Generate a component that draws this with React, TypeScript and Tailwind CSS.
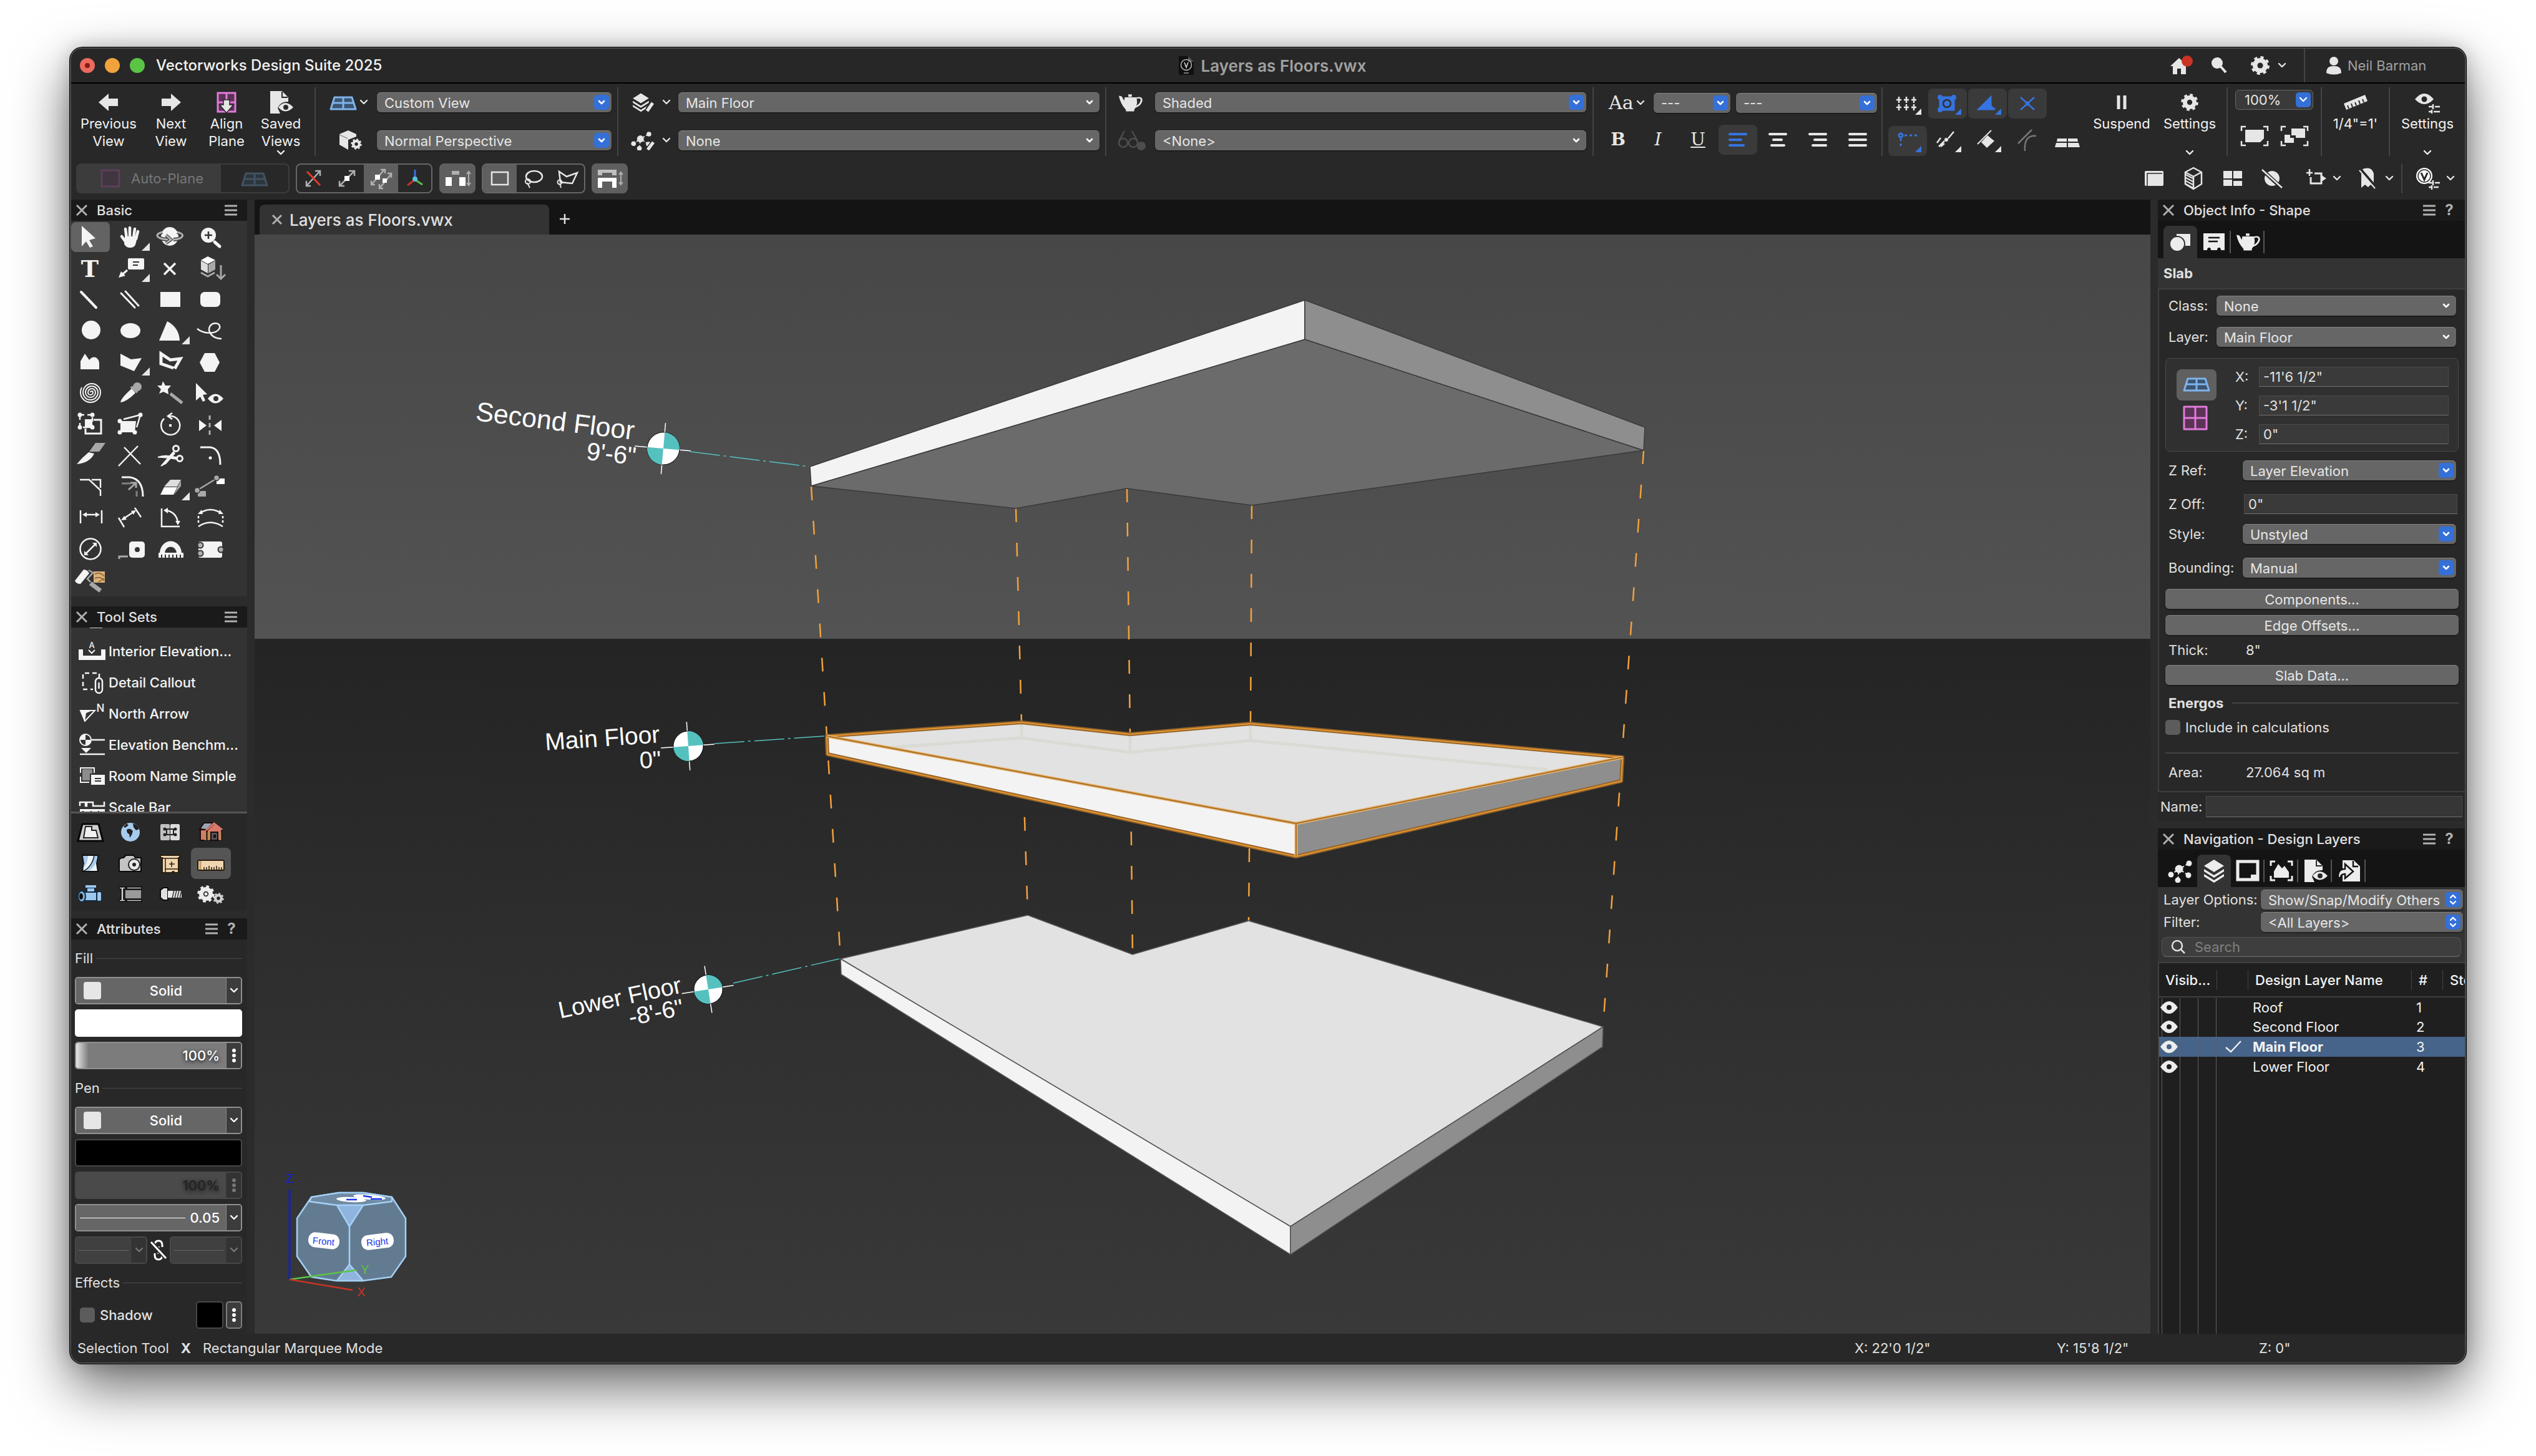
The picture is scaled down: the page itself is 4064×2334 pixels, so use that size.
import { type ReactNode } from "react";
import clsx from "clsx";

type ArrowKind = "blue" | "plain" | "updown";

function Chevron({ className }: { className?: string }) {
  return (
    <svg viewBox="0 0 14 10" className={clsx("h-[10px] w-[14px] shrink-0", className)} fill="none" stroke="currentColor" strokeWidth="2.4">
      <path d="M2 2l5 5 5-5" strokeLinecap="round" strokeLinejoin="round" />
    </svg>
  );
}

function Select({ label, value, arrow = "blue", className }: { label: string; value: string; arrow?: ArrowKind; className?: string }) {
  return (
    <div className={clsx("relative", className)}>
      <select
        aria-label={label}
        defaultValue={value}
        className="block h-8 w-full appearance-none rounded-md border-t border-[#858585] bg-[#666666] pl-3 pr-8 text-[22px] leading-[30px] text-[#e6e6e6] shadow-[0_1px_2px_rgba(0,0,0,0.6)]"
      >
        <option>{value}</option>
      </select>
      <span
        className={clsx(
          "pointer-events-none absolute right-1 top-1 flex h-6 w-6 items-center justify-center rounded-[5px] text-white",
          arrow !== "plain" && "bg-[#3470d8]",
        )}
      >
        {arrow === "updown" ? (
          <svg viewBox="0 0 24 24" className="size-6" fill="none" stroke="currentColor" strokeWidth="2.4" strokeLinecap="round" strokeLinejoin="round">
            <path d="M8 9l4-4 4 4M8 15l4 4 4-4" />
          </svg>
        ) : (
          <svg viewBox="0 0 24 24" className="size-6" fill="none" stroke="currentColor" strokeWidth="2.6" strokeLinecap="round" strokeLinejoin="round">
            <path d="M8 10l4 4 4-4" />
          </svg>
        )}
      </span>
    </div>
  );
}

function Icon({ w = 48, h = 48, children, className }: { w?: number; h?: number; children: ReactNode; className?: string }) {
  return (
    <svg viewBox={`0 0 ${w} ${h}`} width={w} height={h} fill="none" stroke="currentColor" strokeWidth="3" className={clsx("shrink-0", className)}>
      {children}
    </svg>
  );
}

/* Shared glyphs */

const planeGlyph = (
  <g stroke="#7fb4ea" strokeWidth="3" strokeLinejoin="round">
    <path d="M8 8H36L42 27H2Z" fill="#3b5570" />
    <path d="M5 17H39M22 8V27" />
  </g>
);

const layersGlyph = (
  <g fill="currentColor" stroke="none">
    <path d="M20 2L36 12L20 22L4 12Z" />
    <path d="M4 17L20 27L36 17V21L20 31L4 21Z" />
    <path d="M4 25L20 35L36 25V29L20 39L4 29Z" />
  </g>
);

const teapotGlyph = (
  <g>
    <path d="M12 10H31Q36 22 28 35V38H14V35Q5 24 2 7L7 8L11 17Z" fill="currentColor" stroke="none" />
    <path d="M18 4H24V9H18Z" fill="currentColor" stroke="none" />
    <path d="M31 12Q42 8 40 18Q38 26 29 30" strokeWidth="3" />
  </g>
);

const classGlyph = (
  <g fill="currentColor" stroke="currentColor" strokeWidth="2">
    <circle cx="18" cy="16" r="6.5" stroke="none" />
    <circle cx="34" cy="7" r="4.5" stroke="none" />
    <circle cx="5" cy="25" r="4.5" stroke="none" />
    <circle cx="33" cy="26" r="4.5" stroke="none" />
    <circle cx="16" cy="34" r="4.5" stroke="none" />
    <path d="M18 16L34 7M18 16L5 25M18 16L33 26M18 16L16 34" strokeDasharray="3 3" />
  </g>
);

const fileEyeGlyph = (
  <g>
    <path d="M5 2H24L34 12V19Q22 18 17 29L21 38H5Z" fill="currentColor" stroke="none" />
    <path d="M24 3V12H33" stroke="#282828" strokeWidth="2" />
    <path d="M18 28Q29 14 42 28Q29 41 18 28Z" fill="currentColor" stroke="none" />
    <circle cx="30" cy="28" r="4" fill="#282828" stroke="none" />
  </g>
);

// teeth come from the dashed stroke: eight dashes, eight gaps
function GearShape({ cx, cy, r, hole = "#282828" }: { cx: number; cy: number; r: number; hole?: string }) {
  const tooth = (Math.PI * 2 * r) / 16;
  return (
    <g>
      <circle cx={cx} cy={cy} r={r} fill="currentColor" strokeWidth={r * 0.5} strokeDasharray={`${tooth} ${tooth}`} />
      <circle cx={cx} cy={cy} r={r * 0.38} fill={hole} stroke="none" />
    </g>
  );
}

const corner = <path d="M51 47H64V34Z" fill="#e6e6e6" stroke="none" />;

/* Basic palette, one 64x50 drawing per tool */

const basicTools: { name: string; art: ReactNode }[] = [
  { name: "Selection", art: <path d="M19 7L41 27L31 30L37 40L32 42L26 32L19 40Z" fill="currentColor" stroke="none" /> },
  {
    name: "Pan",
    art: (
      <>
        <path d="M27 28L25 12M32 26V10M38 27L40 12M42 28L45 16M27 35L19 24" strokeWidth="4.5" strokeLinecap="round" />
        <path d="M24 24H44L42 34Q40 43 32 42Q26 42 23 36Z" fill="currentColor" stroke="none" />
        {corner}
      </>
    ),
  },
  {
    name: "Flyover",
    art: (
      <>
        <ellipse cx="32" cy="24" rx="14" ry="15" fill="currentColor" stroke="none" />
        <path d="M20 17C5 21 12 29 33 29M44 17C58 20 54 28 38 29" stroke="#333" strokeWidth="6" />
        <path d="M20 17C5 21 12 29 33 29M44 17C58 20 54 28 38 29" stroke="#b0b0b0" />
        <path d="M26 22L34 29L26 35" stroke="#333" strokeWidth="5" />
        <path d="M26 22L34 29L26 35" stroke="#b0b0b0" />
      </>
    ),
  },
  {
    name: "Zoom",
    art: (
      <>
        <circle cx="30" cy="22" r="12" fill="currentColor" stroke="none" />
        <path d="M30 16V28M24 22H36" stroke="#333" strokeWidth="2.5" />
        <path d="M40 33L48 40" strokeWidth="5" strokeLinecap="round" />
      </>
    ),
  },
  {
    name: "Text",
    art: (
      <text x="32" y="39" textAnchor="middle" fontFamily="DejaVu Serif" fontWeight="bold" fontSize="38" fill="currentColor" stroke="none">
        T
      </text>
    ),
  },
  {
    name: "Callout",
    art: (
      <>
        <rect x="29" y="9" width="26" height="18" rx="2" fill="currentColor" stroke="none" />
        <path d="M37 15H47M37 20H45" stroke="#333" strokeWidth="2" />
        <path d="M28 28L20 35" />
        <path d="M14 40L18 30L25 37Z" fill="currentColor" stroke="none" />
        {corner}
      </>
    ),
  },
  { name: "Locus", art: <path d="M23 17L41 35M41 17L23 35" strokeWidth="3.5" /> },
  {
    name: "Symbol",
    art: (
      <>
        <path d="M29 6L41 12L29 18L18 12Z" fill="#fff" stroke="none" />
        <path d="M18 13L29 19V33L18 27Z" fill="#ddd" stroke="none" />
        <path d="M41 13L30 19V33L41 27Z" fill="#a8a8a8" stroke="none" />
        <path d="M18 32L29 38L40 32" stroke="#a8a8a8" />
        <path d="M50 20V42M43 35L50 42L57 35" stroke="#a8a8a8" />
      </>
    ),
  },
  { name: "Line", art: <path d="M18 13L42 38" strokeWidth="4" strokeLinecap="round" /> },
  { name: "Double Line", art: <path d="M18 15L40 38M25 12L46 35" strokeLinecap="round" /> },
  { name: "Rectangle", art: <rect x="17" y="13" width="32" height="24" fill="currentColor" stroke="none" /> },
  { name: "Rounded Rectangle", art: <rect x="17" y="13" width="32" height="24" rx="7" fill="currentColor" stroke="none" /> },
  { name: "Circle", art: <circle cx="34" cy="24" r="15" fill="currentColor" stroke="none" /> },
  { name: "Oval", art: <ellipse cx="33" cy="25" rx="16" ry="12" fill="currentColor" stroke="none" /> },
  {
    name: "Arc",
    art: (
      <>
        <path d="M28 10Q47 20 48 41H15Z" fill="currentColor" stroke="none" />
        {corner}
      </>
    ),
  },
  { name: "Freehand", art: <path d="M12 22C22 30 42 32 48 21C50 12 38 11 33 17C27 26 36 38 51 38" strokeWidth="2.5" /> },
  { name: "Polyline", art: <path d="M17 37V24L24 12L31 22Q37 15 43 19Q47 22 47 28V37Z" fill="currentColor" stroke="none" /> },
  {
    name: "Polygon",
    art: (
      <>
        <path d="M17 12L34 21L51 19L39 40L17 31Z" fill="currentColor" stroke="none" />
        {corner}
      </>
    ),
  },
  { name: "Double Polygon", art: <path d="M38 35L18 28V12L33 22L49 20L40 36" strokeWidth="5" /> },
  { name: "Regular Polygon", art: <path d="M24 11H40L48 26L40 41H24L16 26Z" fill="currentColor" stroke="none" /> },
  {
    name: "Spiral",
    art: (
      <path
        d="M33 24a2 2 0 0 1 4 0a4 4 0 0 1-8 0a6 6 0 0 1 12 0a8 8 0 0 1-16 0a10 10 0 0 1 20 0a12 12 0 0 1-24 0a14 14 0 0 1 28 0a16 16 0 0 1-32 0a17 17 0 0 1 2-8"
        strokeWidth="2"
      />
    ),
  },
  {
    name: "Eyedropper",
    art: (
      <>
        <path d="M17 40Q18 33 35 18L41 25Q27 39 17 40Z" fill="currentColor" stroke="none" />
        <circle cx="44" cy="15" r="7" fill="#a8a8a8" stroke="none" />
        <path d="M34 15L44 24" stroke="#a8a8a8" strokeWidth="4" />
      </>
    ),
  },
  {
    name: "Magic Wand",
    art: (
      <>
        <path d="M21 6L25 13L34 13L29 19L30 27L22 23L15 26L18 19L12 13L19 13Z" fill="currentColor" stroke="none" />
        <path d="M33 26L52 41" stroke="#a8a8a8" strokeWidth="5" />
      </>
    ),
  },
  {
    name: "Visibility",
    art: (
      <>
        <path d="M10 9L28 27L21 28L25 37L21 39L17 31L10 37Z" fill="currentColor" stroke="none" />
        <path d="M29 34Q41 19 54 34Q41 49 29 34Z" fill="currentColor" stroke="none" />
        <circle cx="42" cy="34" r="4" fill="#333" stroke="none" />
      </>
    ),
  },
  {
    name: "Clip",
    art: (
      <>
        <path d="M16 10H36V30H16Z" strokeWidth="2.5" strokeDasharray="7 5" />
        <rect x="24" y="17" width="12" height="14" fill="currentColor" stroke="none" />
        <path d="M38 18H50V40H25V32" />
        <g fill="currentColor" stroke="none">
          <circle cx="16" cy="10" r="3.5" />
          <circle cx="36" cy="10" r="3.5" />
          <circle cx="16" cy="30" r="3.5" />
          <circle cx="36" cy="30" r="3.5" />
        </g>
      </>
    ),
  },
  {
    name: "Reshape",
    art: (
      <>
        <path d="M17 20H42L40 38H17Z" fill="currentColor" stroke="none" />
        <path d="M22 17L49 10L43 30" strokeWidth="2.5" />
        <g fill="currentColor" stroke="none">
          <circle cx="49" cy="10" r="3.5" />
          <circle cx="16" cy="20" r="3.5" />
          <circle cx="16" cy="38" r="3.5" />
          <circle cx="40" cy="38" r="3.5" />
        </g>
      </>
    ),
  },
  {
    name: "Rotate",
    art: (
      <>
        <path d="M23 16A15 15 0 1 0 34 12H29" strokeWidth="2.5" />
        <path d="M36 7L29 12L36 17" strokeWidth="2.5" />
        <rect x="31" y="25" width="4" height="4" fill="currentColor" stroke="none" />
      </>
    ),
  },
  {
    name: "Mirror",
    art: (
      <>
        <path d="M15 18L27 27L15 36ZM51 18L39 27L51 36Z" fill="currentColor" stroke="none" />
        <path d="M32 11V42" stroke="#b0b0b0" strokeDasharray="7 5" />
      </>
    ),
  },
  {
    name: "Split",
    art: (
      <>
        <path d="M11 39Q20 28 30 20L39 22Q32 37 11 39Z" fill="currentColor" stroke="none" />
        <path d="M31 19L41 5H57L47 19Z" fill="#a8a8a8" stroke="none" />
      </>
    ),
  },
  { name: "Connect", art: <path d="M14 42L45 10M23 12L49 39" strokeWidth="2.5" /> },
  {
    name: "Trim",
    art: (
      <>
        <circle cx="42" cy="14" r="4.5" />
        <circle cx="48" cy="30" r="4.5" />
        <path d="M13 28Q24 23 43 28L42 31Q24 28 13 28ZM18 42L38 19L40 22L26 38Z" fill="currentColor" strokeWidth="1.5" />
      </>
    ),
  },
  {
    name: "Fillet",
    art: (
      <>
        <path d="M17 12H33Q49 14 49 40" />
        <circle cx="33" cy="29" r="2.5" fill="currentColor" stroke="none" />
      </>
    ),
  },
  { name: "Chamfer", art: <path d="M16 14H31L49 31V40M35 14H49V27" strokeWidth="2.5" /> },
  {
    name: "Offset",
    art: (
      <>
        <path d="M19 10H32Q53 13 53 41" />
        <path d="M19 20H33M43 32V41" stroke="#808080" />
        <path d="M30 30L42 19M33 19H42V27" stroke="#a8a8a8" />
      </>
    ),
  },
  {
    name: "Eraser",
    art: (
      <>
        <path d="M17 38L23 26H44L38 38Z" fill="#fff" stroke="none" />
        <path d="M23 25L33 14H50L44 25Z" fill="#ddd" stroke="none" />
        <path d="M39 38L45 25L50 15V24Z" fill="#a8a8a8" stroke="none" />
        {corner}
      </>
    ),
  },
  {
    name: "Attribute Mapping",
    art: (
      <>
        <path d="M12 31L43 12" stroke="#a8a8a8" strokeWidth="2.5" />
        <rect x="43" y="12" width="13" height="9" fill="#fff" stroke="none" />
        <rect x="13" y="32" width="13" height="9" fill="#a8a8a8" stroke="none" />
        <circle cx="43" cy="11" r="4.5" fill="#a8a8a8" stroke="#333" strokeWidth="1.5" />
        <circle cx="12" cy="31" r="4.5" fill="#a8a8a8" stroke="#333" strokeWidth="1.5" />
      </>
    ),
  },
  {
    name: "Dimension",
    art: (
      <>
        <path d="M17 13V34M51 13V34M23 20H45" strokeWidth="2.5" />
        <path d="M20 20L27 16V24ZM48 20L41 16V24Z" fill="currentColor" stroke="none" />
      </>
    ),
  },
  {
    name: "Unconstrained Dimension",
    art: (
      <>
        <path d="M14 25L23 40M40 9L50 24M21 27L39 15" strokeWidth="2.5" />
        <path d="M18 29L23 22L27 28ZM42 13L34 14L38 20Z" fill="currentColor" stroke="none" />
      </>
    ),
  },
  {
    name: "Angular Dimension",
    art: (
      <>
        <path d="M19 10V39H48M26 13Q43 16 45 33" strokeWidth="2.5" />
        <path d="M22 13L29 9V18ZM45 37L41 30H49Z" fill="currentColor" stroke="none" />
      </>
    ),
  },
  {
    name: "Arc Length Dimension",
    art: (
      <>
        <path d="M16 18Q33 6 51 18M14 39Q33 26 53 39" strokeWidth="2.5" />
        <path d="M14 22V33M53 22V33" strokeWidth="2.5" strokeDasharray="4 3" />
        <path d="M13 19L19 12L21 19ZM54 19L48 12L46 19Z" fill="currentColor" stroke="none" />
      </>
    ),
  },
  {
    name: "Diameter",
    art: (
      <>
        <circle cx="33" cy="25" r="16.5" strokeWidth="2.5" />
        <path d="M26 32L40 18" strokeWidth="2.5" />
        <path d="M23 35V28L30 35ZM43 15V22L36 15Z" fill="currentColor" stroke="none" />
      </>
    ),
  },
  {
    name: "Tape Measure",
    art: (
      <>
        <rect x="31" y="13" width="25" height="26" rx="5" fill="currentColor" stroke="none" />
        <circle cx="44" cy="26" r="4" fill="#333" stroke="none" />
        <path d="M15 41V37H29" stroke="#a8a8a8" />
      </>
    ),
  },
  {
    name: "Protractor",
    art: (
      <>
        <path d="M16 32A17 19 0 0 1 51 32H43A9 10 0 0 0 24 32Z" fill="currentColor" stroke="none" />
        <rect x="14" y="31" width="40" height="8" rx="1" fill="currentColor" stroke="none" />
        <path d="M19 39V34M25 39V34M31 39V34M37 39V34M43 39V34M49 39V34" stroke="#333" strokeWidth="2" />
      </>
    ),
  },
  {
    name: "Stake",
    art: (
      <>
        <rect x="14" y="13" width="38" height="26" rx="3" fill="currentColor" stroke="none" />
        <g fill="#b0b0b0" stroke="#333" strokeWidth="2">
          <circle cx="17" cy="19" r="4.5" />
          <circle cx="17" cy="32" r="4.5" />
          <circle cx="50" cy="26" r="4.5" />
        </g>
      </>
    ),
  },
  {
    name: "Paint Roller",
    art: (
      <>
        <rect x="38" y="11" width="18" height="18" fill="#d9b27c" stroke="none" />
        <path d="M40 15Q50 12 55 19M40 22Q50 18 55 26M46 28L55 22" stroke="#8a5a24" strokeWidth="1.5" />
        <path d="M8 26L22 8Q28 8 31 14L17 31Q10 31 8 26Z" fill="currentColor" stroke="none" />
        <path d="M30 9L37 13L28 23L33 28" stroke="#a8a8a8" strokeWidth="2.5" />
        <path d="M33 30L49 42" stroke="#a8a8a8" strokeWidth="7" />
      </>
    ),
  },
];

const dimNotes: { name: string; art: ReactNode }[] = [
  {
    name: "Interior Elevation...",
    art: (
      <>
        <path d="M1 22H8V32H37V22H44V39H1Z" fill="currentColor" stroke="none" />
        <text x="22" y="20" textAnchor="middle" fontSize="13" fill="currentColor" stroke="none">
          A
        </text>
        <path d="M17 23L22 28L27 23" strokeWidth="2" />
      </>
    ),
  },
  {
    name: "Detail Callout",
    art: (
      <>
        <path d="M34 18V10H8V36H24" strokeWidth="2.5" strokeDasharray="7 5" />
        <rect x="28" y="18" width="11" height="24" rx="5.5" strokeWidth="2.5" />
        <path d="M33.5 25V35" strokeWidth="2.5" />
      </>
    ),
  },
  {
    name: "North Arrow",
    art: (
      <>
        <path d="M4 20H27L11 37Z" strokeWidth="2" />
        <path d="M3 19H26L13 24L11 38Z" fill="currentColor" stroke="none" />
        <text x="36" y="22" textAnchor="middle" fontSize="17" fill="currentColor" stroke="none">
          N
        </text>
      </>
    ),
  },
  {
    name: "Elevation Benchm...",
    art: (
      <>
        <circle cx="12" cy="17" r="9" strokeWidth="2" />
        <path d="M12 17V8A9 9 0 0 0 3 17ZM12 17V26A9 9 0 0 0 21 17ZM5 30H21L13 38Z" fill="currentColor" stroke="none" />
        <path d="M22 17H43M3 40H43" strokeWidth="2.5" />
      </>
    ),
  },
  {
    name: "Room Name Simple",
    art: (
      <>
        <rect x="7" y="14" width="16" height="18" fill="#8c8c8c" stroke="none" />
        <path d="M4 20V12H26V20M4 26V35H18" strokeWidth="2" />
        <rect x="20" y="22" width="24" height="18" fill="currentColor" stroke="#333" strokeWidth="2" />
        <path d="M27 29H37M27 33H37" stroke="#333" strokeWidth="2" />
      </>
    ),
  },
  {
    name: "Scale Bar",
    art: (
      <>
        <path d="M3 23V17H12V23H14V17H24V23H42V16" strokeWidth="2.5" />
        <path d="M3 28H43V44H3Z" fill="currentColor" stroke="none" />
        <path d="M15 38V33M21 38V31M27 38V33M33 38V31M38 38V33" stroke="#333" strokeWidth="2" />
        <circle cx="8" cy="33" r="2" fill="#333" stroke="none" />
      </>
    ),
  },
];

const toolSets: { name: string; art: ReactNode }[] = [
  {
    name: "Building Shell",
    art: (
      <>
        <path d="M20 12H46L53 39H13Z" fill="#cfcfcf" stroke="#050505" />
        <path d="M25 16H35V22H42L45 34H22Z" fill="#f0f0f0" stroke="#222" strokeWidth="2" />
      </>
    ),
  },
  {
    name: "GIS",
    art: (
      <>
        <circle cx="33" cy="25" r="15" fill="#a6cbee" stroke="none" />
        <path d="M27 21Q32 17 37 23Q36 29 32 34L31 28Q27 27 27 21ZM37 11Q45 13 47 20L42 22L38 17ZM22 16L27 11L30 14L24 18Z" fill="#222" stroke="none" />
      </>
    ),
  },
  {
    name: "Electrical",
    art: (
      <>
        <rect x="17" y="12" width="15" height="26" rx="2" fill="#c0c0c0" stroke="none" />
        <rect x="33" y="12" width="15" height="26" rx="2" fill="#dcdcdc" stroke="none" />
        <path d="M23 20H42M23 29H42M27 20V29M38 20V29" stroke="#222" strokeWidth="2" />
        <g fill="#222" stroke="none">
          <circle cx="24" cy="20" r="2.5" />
          <circle cx="24" cy="29" r="2.5" />
          <circle cx="41" cy="20" r="2.5" />
          <circle cx="41" cy="29" r="2.5" />
        </g>
      </>
    ),
  },
  {
    name: "Framing",
    art: (
      <>
        <path d="M17 21V38H27V21ZM28 22L40 11L51 19V38H28Z" fill="#d8796a" stroke="#1a0d0a" strokeWidth="2" />
        <path d="M16 20L23 10H38L27 21Z" fill="#9aa5b5" stroke="#1a0d0a" strokeWidth="2" />
        <path d="M26 22L39 11L52 21" stroke="#d8796a" strokeWidth="3" />
        <path d="M30 24V38M49 24V38M25 24V38" stroke="#c08a52" strokeWidth="3" />
        <rect x="34" y="25" width="11" height="13" fill="#555" stroke="#111" strokeWidth="2" />
        <rect x="38" y="29" width="4" height="5" fill="#111" stroke="none" />
      </>
    ),
  },
  {
    name: "3D Modeling",
    art: (
      <>
        <path d="M20 12H45L43 25L45 38H20L22 25Z" fill="#eef4fa" stroke="#111" strokeWidth="2" />
        <path d="M21 13H29Q29 24 21 34L23 25ZM44 16Q42 30 30 37H22Q36 28 39 13H44Z" fill="#a6cbee" stroke="none" />
        <path d="M39 12Q36 30 21 38" stroke="#111" strokeWidth="1.5" />
      </>
    ),
  },
  {
    name: "Visualization",
    art: (
      <>
        <path d="M15 20Q15 16 22 16L26 12H38L41 16H50V38H15Z" fill="#c4c4c4" stroke="#0a0a0a" strokeWidth="2" />
        <circle cx="39" cy="27" r="9" fill="#e8e8e8" stroke="#222" strokeWidth="2" />
        <circle cx="39" cy="27" r="3" fill="#222" stroke="none" />
      </>
    ),
  },
  {
    name: "Furn/Fixtures",
    art: (
      <>
        <path d="M17 12H48V16H46V40H40Q38 36 35 40H20V16H17Z" fill="#efd6b0" stroke="#2a1c0c" strokeWidth="2" />
        <path d="M25 17V40M35 22V31M31 26H40M25 34H46M20 17H46" stroke="#2a1c0c" strokeWidth="1.5" />
      </>
    ),
  },
  {
    name: "Dims/Notes",
    art: (
      <>
        <rect x="13" y="20" width="42" height="16" rx="2" fill="#efd6b0" stroke="#2a1c0c" strokeWidth="2" />
        <path d="M17 21V35" stroke="#c99b62" strokeWidth="3" />
        <path d="M23 36V31M27 36V31M31 36V29M35 36V31M39 36V31M43 36V29M47 36V31M51 36V31" stroke="#2a1c0c" strokeWidth="1.5" />
      </>
    ),
  },
  {
    name: "MEP",
    art: (
      <>
        <path d="M20 21H46V35H20ZM27 14H40V21H27Z" fill="#9cc8ee" stroke="#12293d" strokeWidth="2" />
        <path d="M25 12H42" stroke="#9cc8ee" strokeWidth="4" />
        <ellipse cx="19" cy="28" rx="6" ry="9" fill="#7fb0dc" stroke="#12293d" strokeWidth="2" />
        <ellipse cx="18" cy="28" rx="3" ry="5" fill="#111" stroke="none" />
        <rect x="43" y="20" width="8" height="16" rx="3" fill="#9cc8ee" stroke="#12293d" strokeWidth="2" />
      </>
    ),
  },
  {
    name: "Detailing",
    art: (
      <>
        <path d="M27 13H51V16H27ZM27 33H51V36H27Z" fill="#d0d0d0" stroke="#0a0a0a" strokeWidth="1.5" />
        <rect x="25" y="18" width="25" height="13" fill="#9a9a9a" stroke="none" />
        <path d="M15 13H25V16H22V33H25V36H15V33H18V16H15Z" fill="#d8d8d8" stroke="#0a0a0a" strokeWidth="1.5" />
      </>
    ),
  },
  {
    name: "Fasteners",
    art: (
      <>
        <path d="M17 18L22 14H29V34H22L17 30Z" fill="#e0e0e0" stroke="#0a0a0a" strokeWidth="2" />
        <rect x="29" y="19" width="22" height="11" fill="#e8e8e8" stroke="none" />
        <path d="M36 31L39 18M40 31L43 18M44 31L47 18M48 31L51 18" stroke="#333" strokeWidth="1.5" />
      </>
    ),
  },
  {
    name: "Machine Design",
    art: (
      <>
        <g color="#d0d0d0">
          <GearShape cx={46} cy={31} r={7} hole="#222" />
        </g>
        <GearShape cx={26} cy={24} r={11} />
        <circle cx="26" cy="24" r="2.5" fill="#ececec" stroke="none" />
      </>
    ),
  },
];

/* Window chrome */

function TitleBar() {
  return (
    <header className="flex h-14 items-center border-b-2 border-black bg-[#272727]">
      <div className="flex flex-1 items-center pl-[14px]">
        <div className="flex gap-4">
          <button aria-label="Close" className="flex size-6 items-center justify-center rounded-full bg-[#ec6a5e]">
            <span className="size-2 rounded-full bg-[#8b1a10]" />
          </button>
          <button aria-label="Minimize" className="size-6 rounded-full bg-[#f0a33c]" />
          <button aria-label="Zoom window" className="size-6 rounded-full bg-[#5ac545]" />
        </div>
        <span className="ml-[18px] text-2xl font-medium text-[#f2f2f2]">Vectorworks Design Suite 2025</span>
      </div>
      <div className="flex items-center gap-3 text-[26px] font-semibold text-[#a0a0a0]">
        <svg viewBox="0 0 24 30" className="h-[30px] w-6">
          <path d="M0 0H15L24 9V30H0Z" fill="#101010" />
          <path d="M15 0L24 9H15Z" fill="#555" />
          <circle cx="12" cy="14" r="8.5" fill="none" stroke="#bbb" strokeWidth="1.5" />
          <path d="M9 10L12 18L15 10" fill="none" stroke="#ddd" strokeWidth="1.5" />
          <path d="M8 27H16" stroke="#777" strokeWidth="2" />
        </svg>
        <h1>Layers as Floors.vwx</h1>
      </div>
      <div className="flex h-full flex-1 items-center justify-end text-[#e6e6e6]">
        <button aria-label="Home" className="mr-[26px]">
          <Icon w={40} h={32}>
            <path d="M2 17L16 4L30 17H27V30H19V21H13V30H6V17Z" fill="currentColor" stroke="none" />
            <circle cx="29" cy="9" r="9" fill="#c93425" stroke="none" />
          </Icon>
        </button>
        <button aria-label="Find" className="mr-9">
          <Icon w={28} h={32}>
            <circle cx="11" cy="12" r="9" fill="currentColor" stroke="none" />
            <path d="M17 18L25 27" strokeWidth="4" />
          </Icon>
        </button>
        <button aria-label="Preferences" className="mr-7 flex items-center gap-3">
          <Icon w={32} h={32}>
            <GearShape cx={16} cy={16} r={12} />
          </Icon>
          <Chevron />
        </button>
        <button className="flex h-full w-[258px] items-center gap-2 border-l-2 border-[#444] pl-8 text-[22px] text-[#a0a0a0]">
          <Icon w={28} h={32} className="text-[#e6e6e6]">
            <circle cx="14" cy="9" r="7" fill="currentColor" stroke="none" />
            <path d="M2 28Q2 16 14 17Q26 16 26 28Q14 33 2 28Z" fill="currentColor" stroke="none" />
          </Icon>
          Neil Barman
        </button>
      </div>
    </header>
  );
}

function BigButton({ icon, lines, menu, className }: { icon: ReactNode; lines: string[]; menu?: boolean; className: string }) {
  return (
    <button className={clsx("flex h-[110px] flex-col items-center pt-1 text-[22px] leading-7 text-[#f2f2f2]", className)}>
      <span className="flex h-10 items-center">{icon}</span>
      {lines.map((line) => (
        <span key={line} className="whitespace-nowrap">
          {line}
        </span>
      ))}
      {menu && <Chevron className="mt-auto" />}
    </button>
  );
}

function Cell({ label, active, children }: { label: string; active?: boolean; children: ReactNode }) {
  return (
    <button
      aria-label={label}
      className={clsx("flex h-12 w-[62px] items-center justify-center rounded-lg", active ? "bg-[#3a3a3a] text-[#3574e0]" : "text-[#e6e6e6]")}
    >
      {children}
    </button>
  );
}

function AlignIcon({ rows }: { rows: [number, number][] }) {
  return (
    <Icon w={32} h={28}>
      {rows.map(([x1, x2], i) => (
        <path key={i} d={`M${x1} ${5 + i * 9}H${x2}`} strokeWidth="4" strokeLinecap="round" />
      ))}
    </Icon>
  );
}

const snapCorner = <path d="M46 40V30L36 40Z" fill="currentColor" stroke="none" />;

function ViewBar() {
  return (
    <div className="flex h-[122px] py-1.5">
      <div className="flex w-[392px] shrink-0 border-r-2 border-[#444]">
        <BigButton
          className="w-[120px]"
          lines={["Previous", "View"]}
          icon={
            <Icon w={36} h={36} className="text-[#e6e6e6]">
              <path d="M2 18L18 4V12H33V24H18V32Z" fill="currentColor" stroke="none" />
            </Icon>
          }
        />
        <BigButton
          className="w-20"
          lines={["Next", "View"]}
          icon={
            <Icon w={36} h={36} className="text-[#e6e6e6]">
              <path d="M34 18L18 4V12H3V24H18V32Z" fill="currentColor" stroke="none" />
            </Icon>
          }
        />
        <BigButton
          className="w-[98px]"
          lines={["Align", "Plane"]}
          icon={
            <Icon w={34} h={36}>
              <path d="M3 3H31V33H3ZM3 18H31M17 3V33" fill="#5a3355" stroke="#e27bdb" />
              <path d="M12 14H22V22H28L17 35L6 22H12Z" fill="#e6e6e6" stroke="#282828" strokeWidth="1.5" />
            </Icon>
          }
        />
        <BigButton className="w-[76px]" lines={["Saved", "Views"]} menu icon={<Icon w={44} h={40} className="text-[#e6e6e6]">{fileEyeGlyph}</Icon>} />
      </div>

      <div className="flex shrink-0 flex-col gap-[29px] border-r-2 border-[#444] pl-[22px] pr-[9px] pt-2">
        <div className="flex items-center">
          <button aria-label="Working plane" className="flex w-[76px] items-center gap-1 text-[#e6e6e6]">
            <Icon w={44} h={32}>{planeGlyph}</Icon>
            <Chevron />
          </button>
          <Select label="View" value="Custom View" className="w-[376px]" />
        </div>
        <div className="flex items-center">
          <span className="flex w-[76px] items-center pl-3 text-[#e6e6e6]">
            <Icon w={42} h={32}>
              <path d="M4 6L18 0L31 6V10L18 15V31L4 23Z" fill="currentColor" stroke="none" />
              <path d="M4 7L17 13" stroke="#999" strokeWidth="1.5" />
              <GearShape cx={31} cy={22} r={7} />
            </Icon>
          </span>
          <Select label="Projection" value="Normal Perspective" className="w-[376px]" />
        </div>
      </div>

      <div className="flex min-w-0 flex-1 flex-col gap-[29px] border-r-2 border-[#444] pl-5 pr-[9px] pt-2">
        <div className="flex items-center">
          <button aria-label="Layers" className="flex w-[76px] items-center gap-2 text-[#e6e6e6]">
            <Icon w={42} h={32}>
              <g transform="scale(0.8)">{layersGlyph}</g>
              <path d="M27 28L36 16" stroke="#282828" strokeWidth="9" />
              <path d="M26 30L35 17" strokeWidth="5" />
            </Icon>
            <Chevron />
          </button>
          <Select label="Active layer" value="Main Floor" arrow="plain" className="flex-1" />
        </div>
        <div className="flex items-center">
          <button aria-label="Classes" className="flex w-[76px] items-center gap-2 text-[#e6e6e6]">
            <Icon w={42} h={32}>
              <g transform="scale(0.85)">{classGlyph}</g>
              <path d="M27 31L36 19" stroke="#282828" strokeWidth="8" />
              <path d="M27 31L36 19" strokeWidth="5" />
            </Icon>
            <Chevron />
          </button>
          <Select label="Active class" value="None" arrow="plain" className="flex-1" />
        </div>
      </div>

      <div className="flex min-w-0 flex-1 flex-col gap-[29px] border-r-2 border-[#444] pl-[18px] pr-[10px] pt-2">
        <div className="flex items-center">
          <span className="w-[60px] text-[#e6e6e6]">
            <Icon w={44} h={32}>
              <g transform="scale(0.95 0.8)">{teapotGlyph}</g>
            </Icon>
          </span>
          <Select label="Render mode" value="Shaded" className="flex-1" />
        </div>
        <div className="flex items-center">
          <span className="w-[60px] text-[#4d4d4d]">
            <Icon w={48} h={32}>
              <g strokeWidth="2.5">
                <circle cx="9" cy="20" r="7" />
                <circle cx="25" cy="20" r="7" />
                <path d="M2 17L11 1M32 17L23 1" />
              </g>
              <circle cx="38" cy="25" r="7" fill="currentColor" stroke="none" />
            </Icon>
          </span>
          <Select label="Render style" value="<None>" arrow="plain" className="flex-1" />
        </div>
      </div>

      <div className="flex w-[463px] shrink-0 flex-col border-r-2 border-[#444] pl-2">
        <div className="mb-3 flex h-12 items-center pt-px">
          <button aria-label="Font" className="flex w-[88px] items-center gap-1 pl-4 font-['DejaVu_Serif'] text-[30px] text-[#e6e6e6]">
            Aa
            <Chevron />
          </button>
          <Select label="Font size" value="---" className="mr-[9px] w-[123px]" />
          <Select label="Font family" value="---" className="w-[226px]" />
        </div>
        <div className="flex gap-0.5">
          <Cell label="Bold">
            <span className="font-['DejaVu_Serif'] text-[28px] font-bold">B</span>
          </Cell>
          <Cell label="Italic">
            <span className="font-['DejaVu_Serif'] text-[28px] italic">I</span>
          </Cell>
          <Cell label="Underline">
            <span className="font-['DejaVu_Serif'] text-[28px] underline">U</span>
          </Cell>
          <Cell label="Align left" active>
            <AlignIcon rows={[[3, 29], [3, 21], [3, 25]]} />
          </Cell>
          <Cell label="Align center">
            <AlignIcon rows={[[3, 29], [9, 22], [6, 26]]} />
          </Cell>
          <Cell label="Align right">
            <AlignIcon rows={[[3, 29], [11, 29], [8, 29]]} />
          </Cell>
          <Cell label="Justify">
            <AlignIcon rows={[[3, 29], [3, 29], [3, 29]]} />
          </Cell>
        </div>
      </div>

      <div className="flex w-[553px] shrink-0 border-r-2 border-[#444] pl-[9px]">
        <div className="flex flex-col gap-3 pt-0.5">
          <div className="flex gap-0.5">
            <Cell label="Snap to grid">
              <Icon w={48} h={44}>
                <path d="M6 16H14M18 16H26M30 16H38M6 28H14M18 28H26M30 28H38M10 11V21M22 11V21M34 11V21M10 23V33M22 23V33M34 23V33" strokeWidth="2.5" />
                {snapCorner}
              </Icon>
            </Cell>
            <Cell label="Snap to object" active>
              <Icon w={48} h={44}>
                <rect x="12" y="12" width="22" height="20" fill="currentColor" />
                <circle cx="23" cy="22" r="6" stroke="#303030" strokeWidth="2.5" />
                <circle cx="12" cy="12" r="4" fill="currentColor" stroke="none" />
                <circle cx="34" cy="12" r="4" fill="currentColor" stroke="none" />
                <circle cx="12" cy="32" r="4" fill="currentColor" stroke="none" />
                {snapCorner}
              </Icon>
            </Cell>
            <Cell label="Snap to angle" active>
              <Icon w={48} h={44}>
                <path d="M10 31L29 12V24Q30 28 36 31Z" fill="currentColor" />
                {snapCorner}
              </Icon>
            </Cell>
            <Cell label="Snap to intersection" active>
              <Icon w={48} h={44}>
                <path d="M13 12L35 32M35 12L13 32" strokeWidth="2.5" />
                <circle cx="24" cy="22" r="3.5" fill="currentColor" stroke="none" />
              </Icon>
            </Cell>
          </div>
          <div className="flex gap-0.5">
            <Cell label="Smart points" active>
              <Icon w={48} h={44}>
                <path d="M13 18V34M19 13H40" strokeDasharray="4 4" />
                <circle cx="13" cy="13" r="3" />
                {snapCorner}
              </Icon>
            </Cell>
            <Cell label="Smart edge">
              <Icon w={48} h={44}>
                <path d="M10 31L19 22M25 18L34 7M7 25L13 17M13 31L19 26" strokeWidth="2.5" />
                <circle cx="22" cy="20" r="3" fill="currentColor" stroke="none" />
                {snapCorner}
              </Icon>
            </Cell>
            <Cell label="Snap to distance">
              <Icon w={48} h={44}>
                <path d="M14 24L24 13L35 22L23 33Z" fill="currentColor" stroke="none" />
                <path d="M8 27L30 5" strokeWidth="2" />
                {snapCorner}
              </Icon>
            </Cell>
            <Cell label="Snap to tangent">
              <Icon w={48} h={44} className="text-[#777]">
                <path d="M9 26L31 4M38 14Q18 12 20 38" strokeWidth="2.5" />
              </Icon>
            </Cell>
            <Cell label="Working plane snap">
              <Icon w={48} h={44}>
                <path d="M8 18H23V23H7ZM25 18H40L41 23H25ZM6 25H23V32H4ZM25 25H42L44 32H25Z" fill="currentColor" stroke="none" />
              </Icon>
            </Cell>
          </div>
        </div>
        <BigButton
          className="ml-[6px] w-[100px]"
          lines={["Suspend"]}
          icon={
            <Icon w={20} h={26} className="text-[#e6e6e6]">
              <path d="M5 2V24M15 2V24" strokeWidth="5" />
            </Icon>
          }
        />
        <BigButton
          className="ml-1 w-[110px]"
          lines={["Settings"]}
          menu
          icon={
            <Icon w={32} h={32} className="text-[#e6e6e6]">
              <GearShape cx={16} cy={16} r={11} />
            </Icon>
          }
        />
      </div>

      <div className="flex w-[151px] shrink-0 flex-col border-r-2 border-[#444] pl-3 pt-1">
        <div className="relative w-[125px]">
          <input aria-label="Zoom" defaultValue="100%" className="h-8 w-full rounded-md border border-[#666] bg-[#3a3a3a] pl-3.5 text-[22px] text-[#e6e6e6]" />
          <button aria-label="Zoom presets" className="absolute right-1 top-1 flex h-6 w-6 items-center justify-center rounded-[5px] bg-[#3470d8] text-white">
            <Chevron />
          </button>
        </div>
        <div className="mt-6 flex gap-[18px] pl-2 text-[#e6e6e6]">
          <button aria-label="Fit to page">
            <Icon w={46} h={36}>
              <path d="M2 10V3H9M37 3H44V10M44 26V33H37M9 33H2V26" strokeWidth="2.5" />
              <path d="M8 8H38V22L32 28H8Z" fill="currentColor" stroke="none" />
            </Icon>
          </button>
          <button aria-label="Fit to objects">
            <Icon w={46} h={36}>
              <path d="M2 10V3H9M37 3H44V10M44 26V33H37M9 33H2V26" strokeWidth="2.5" />
              <path d="M18 6H40V21H25V17H18ZM7 16H16V21H22V29H7Z" fill="currentColor" stroke="none" />
            </Icon>
          </button>
        </div>
      </div>

      <div className="w-[109px] shrink-0 border-r-2 border-[#444]">
        <BigButton
          className="w-full"
          lines={[`1/4"=1'`]}
          icon={
            <Icon w={42} h={28} className="text-[#e6e6e6]">
              <path d="M2 16L36 2L40 12L6 26Z" fill="currentColor" stroke="none" />
              <path d="M10 24L8 19M16 22L14 16M22 19L20 14M28 17L26 11M34 14L32 9" stroke="#282828" strokeWidth="2" />
            </Icon>
          }
        />
      </div>
      <BigButton
        className="w-[120px] shrink-0"
        lines={["Settings"]}
        menu
        icon={
          <Icon w={44} h={36} className="text-[#e6e6e6]">
            <path d="M2 13Q17 -5 32 13Q17 29 2 13Z" fill="currentColor" stroke="none" />
            <circle cx="17" cy="13" r="4.5" fill="#282828" stroke="none" />
            <path d="M24 25H30M34 25H42M24 33H28M32 33H42M31 21V29M29 30V36" strokeWidth="2.5" />
          </Icon>
        }
      />
    </div>
  );
}

function ModeButton({ label, active, width, children }: { label: string; active?: boolean; width: string; children: ReactNode }) {
  return (
    <button aria-label={label} className={clsx("flex h-full items-center justify-center text-[#e6e6e6]", width, active && "bg-[#5f5f5f]")}>
      {children}
    </button>
  );
}

function ModeBar() {
  const group = "flex h-12 overflow-hidden rounded-lg border-2 border-[#666]";
  return (
    <div className="flex h-16 items-start pt-1.5">
      <div className="ml-2 mr-[10px] flex h-12 w-[342px] overflow-hidden rounded-lg border-2 border-[#3c3c3c] text-[#777]">
        <button className="flex flex-1 items-center gap-4 bg-[#3c3c3c] pl-9 text-[22px]">
          <Icon w={34} h={32}>
            <path d="M3 3H31V29H3Z" stroke="#5c3f59" fill="#403640" />
          </Icon>
          Auto-Plane
        </button>
        <button aria-label="Layer plane" className="flex w-[108px] items-center justify-center opacity-30">
          <Icon w={44} h={32}>{planeGlyph}</Icon>
        </button>
      </div>
      <div className={clsx(group, "mr-[11px]")}>
        <ModeButton label="Disable interactive scaling" width="w-[53px]">
          <Icon w={36} h={36}>
            <path d="M6 30L28 6M20 6H28V14M6 22V30H13" stroke="#b0b0b0" strokeWidth="2.5" />
            <path d="M7 7L28 29" stroke="#e03a2c" />
          </Icon>
        </ModeButton>
        <ModeButton label="Single object scaling" width="w-[54px]">
          <Icon w={36} h={36}>
            <path d="M6 30L30 6M21 6H30V14M6 22V30H14" stroke="#b0b0b0" strokeWidth="2.5" />
            <rect x="14" y="14" width="8" height="8" fill="#fff" stroke="none" />
          </Icon>
        </ModeButton>
        <ModeButton label="Unrestricted scaling" width="w-[55px]" active>
          <Icon w={36} h={36}>
            <path d="M2 22V28H8M2 28L23 4M17 4H24V10M15 34L34 11M28 10H34V17M15 27V34H21" stroke="#b0b0b0" strokeWidth="2.5" />
            <path d="M8 12H16V20H8ZM20 18H27V25H20Z" fill="#fff" stroke="none" />
          </Icon>
        </ModeButton>
        <ModeButton label="Triad" width="w-[53px]">
          <Icon w={36} h={36}>
            <path d="M18 18V4" stroke="#3574e0" />
            <path d="M18 20L6 29" stroke="#c93425" />
            <path d="M18 20L30 28" stroke="#5ac545" />
            <circle cx="18" cy="19" r="4" fill="#5bc0d8" stroke="none" />
          </Icon>
        </ModeButton>
      </div>
      <button aria-label="Wall insertion" className="mr-[10px] flex h-12 w-[58px] items-center justify-center rounded-lg bg-[#5f5f5f] text-white">
        <Icon w={46} h={32}>
          <path d="M4 14H14V28H4ZM26 14H36V28H26Z" fill="currentColor" stroke="none" />
          <rect x="14" y="4" width="12" height="6" fill="#b0b0b0" stroke="none" />
          <path d="M41 6V26M38 9L41 5L44 9M38 23L41 27L44 23" stroke="#b0b0b0" strokeWidth="2" />
        </Icon>
      </button>
      <div className={clsx(group, "mr-[10px]")}>
        <ModeButton label="Rectangular marquee" width="w-[54px]" active>
          <Icon w={36} h={32}>
            <rect x="5" y="6" width="26" height="20" strokeWidth="2.5" />
          </Icon>
        </ModeButton>
        <ModeButton label="Lasso marquee" width="w-[54px]">
          <Icon w={36} h={36}>
            <ellipse cx="19" cy="15" rx="13" ry="9" strokeWidth="2.5" />
            <circle cx="9" cy="23" r="4" strokeWidth="2" />
            <path d="M8 25L12 33" strokeWidth="2" />
          </Icon>
        </ModeButton>
        <ModeButton label="Polygonal marquee" width="w-[54px]">
          <Icon w={40} h={36}>
            <path d="M7 7L19 15L36 9L28 26L9 24Z" strokeWidth="2.5" />
            <circle cx="8" cy="24" r="3.5" strokeWidth="2" />
            <path d="M8 26L10 33" strokeWidth="2" />
          </Icon>
        </ModeButton>
      </div>
      <button aria-label="Offset insertion" className="flex h-12 w-[58px] items-center justify-center rounded-lg bg-[#5f5f5f] text-white">
        <Icon w={46} h={34}>
          <path d="M4 16H34V32H27V22H11V32H4Z" fill="currentColor" stroke="none" />
          <path d="M4 3H34V12H27V8H11V12H4Z" fill="#c0c0c0" stroke="none" />
          <path d="M41 8V26M38 11L41 7L44 11M38 23L41 27L44 23" stroke="#b0b0b0" strokeWidth="2" />
        </Icon>
      </button>

      <div className="ml-auto flex h-12 items-center pr-4 text-[#e6e6e6]">
        <button aria-label="Sheet" className="mr-7">
          <Icon w={36} h={32}>
            <rect x="3" y="4" width="30" height="24" rx="2" fill="currentColor" stroke="none" />
            <path d="M7 28V8H31" stroke="#282828" strokeWidth="1.5" />
          </Icon>
        </button>
        <button aria-label="Clip cube" className="mr-7">
          <Icon w={34} h={40}>
            <path d="M17 3L30 10V29L17 37L4 29V10ZM4 10L17 17L30 10M17 17V37" strokeWidth="2.5" strokeLinejoin="round" />
            <path d="M5 14L16 20M5 19L16 25M5 24L16 30M5 29L16 35" strokeWidth="2" />
          </Icon>
        </button>
        <button aria-label="Multiple views" className="mr-7">
          <Icon w={36} h={32}>
            <path d="M3 4H17V16H3ZM19 4H33V16H19ZM3 18H17V28H3ZM19 20H33V28H19Z" fill="currentColor" stroke="none" />
          </Icon>
        </button>
        <button aria-label="Data visualization" className="mr-9">
          <Icon w={34} h={34}>
            <circle cx="17" cy="17" r="12" fill="currentColor" stroke="none" />
            <path d="M2 4L32 32" stroke="#282828" strokeWidth="6" />
            <path d="M1 3L33 32" strokeWidth="2.5" />
          </Icon>
        </button>
        <button aria-label="Saved crop" className="mr-7 flex items-center gap-2">
          <Icon w={36} h={36}>
            <path d="M2 9H12M7 3V14" strokeWidth="2.5" />
            <path d="M15 10H26V26H9V16" />
            <path d="M25 12L34 18L25 24Z" fill="currentColor" stroke="none" />
          </Icon>
          <Chevron />
        </button>
        <button aria-label="Ghost" className="mr-3 flex items-center gap-3">
          <Icon w={30} h={36}>
            <path d="M4 4Q20 -3 24 10V32L19 28L15 32L10 28L4 33Z" fill="currentColor" stroke="none" />
            <path d="M2 3L27 32" stroke="#282828" strokeWidth="5" />
            <path d="M1 5L26 34" strokeWidth="2" />
          </Icon>
          <Chevron />
        </button>
        <button aria-label="View settings" className="flex h-12 items-center gap-2 border-l-2 border-[#444] pl-5">
          <Icon w={42} h={38}>
            <circle cx="15" cy="15" r="13" fill="#fff" stroke="none" />
            <circle cx="15" cy="15" r="10" stroke="#282828" strokeWidth="1.5" />
            <path d="M10 10L15 21L20 10" stroke="#282828" />
            <path d="M22 26H28M32 26H40M22 33H26M30 33H38M29 22V30M27 30V37" strokeWidth="2.5" />
          </Icon>
          <Chevron />
        </button>
      </div>
    </div>
  );
}

function PanelHeader({ title, help }: { title: string; help?: boolean }) {
  return (
    <div className="flex h-[34px] shrink-0 items-center bg-[#1a1a1a] text-[22px] text-[#e0e0e0]">
      <button aria-label={`Close ${title}`} className="ml-[7px] mr-3.5 text-[#b0b0b0]">
        <Icon w={20} h={20}>
          <path d="M2 2L18 18M18 2L2 18" />
        </Icon>
      </button>
      <h2 className="flex-1 font-medium">{title}</h2>
      <button aria-label={`${title} menu`} className={clsx("text-[#b0b0b0]", help ? "mr-3" : "mr-3.5")}>
        <Icon w={24} h={20}>
          <path d="M2 3H22M2 10H22M2 17H22" />
        </Icon>
      </button>
      {help && (
        <button aria-label={`${title} help`} className="mr-[17px] w-4 text-2xl font-bold leading-none text-[#b0b0b0]">
          ?
        </button>
      )}
    </div>
  );
}

/* Left column */

function BasicPalette() {
  return (
    <section className="mb-4 bg-[#333]">
      <PanelHeader title="Basic" />
      <div className="grid grid-cols-[repeat(4,64px)] py-px text-[#f4f4f4]">
        {basicTools.map((tool, i) => (
          <button
            key={tool.name}
            aria-label={tool.name}
            className={clsx("h-[50px]", i === 0 && "rounded-lg border-y border-r-2 border-transparent bg-[#636363] bg-clip-padding")}
          >
            <svg viewBox={i === 0 ? "2 1 62 48" : "2 0 64 50"} className="block size-full" fill="none" stroke="currentColor" strokeWidth="3">
              {tool.art}
            </svg>
          </button>
        ))}
      </div>
    </section>
  );
}

function ToolSetsPalette() {
  return (
    <section className="mb-3 bg-[#282828]">
      <PanelHeader title="Tool Sets" />
      <ul className="h-[298px] overflow-hidden border-b-[3px] border-[#555] bg-[#333] text-[22px] text-[#f4f4f4]">
        <li className="ml-[30px] h-[13px] w-5 border-t border-[#ccc]" />
        {dimNotes.map((tool) => (
          <li key={tool.name}>
            <button className="flex h-[50px] w-full items-center gap-[3px] whitespace-nowrap pl-[11px] font-medium">
              <Icon w={46} h={50}>{tool.art}</Icon>
              {tool.name}
            </button>
          </li>
        ))}
      </ul>
      <div className="grid grid-cols-[repeat(4,64px)] pb-px pt-[5px] text-[#ececec]">
        {toolSets.map((set) => (
          <button key={set.name} aria-label={set.name} className={clsx("h-[50px] rounded-lg", set.name === "Dims/Notes" && "bg-[#555]")}>
            <svg viewBox="2 0 64 50" className="block size-full" fill="none" stroke="currentColor" strokeWidth="3">
              {set.art}
            </svg>
          </button>
        ))}
      </div>
    </section>
  );
}

function SectionTitle({ children }: { children: string }) {
  return (
    <h3 className="my-2 flex h-7 items-center gap-1 text-[22px] text-[#e0e0e0]">
      {children}
      <span className="h-px flex-1 bg-[#4a4a4a]" />
    </h3>
  );
}

const dots = (
  <svg viewBox="0 0 8 24" className="h-6 w-2" fill="currentColor">
    <circle cx="4" cy="4" r="3" />
    <circle cx="4" cy="12" r="3" />
    <circle cx="4" cy="20" r="3" />
  </svg>
);

function AttributeRow({ label, end, dim, children }: { label: string; end: ReactNode; dim?: boolean; children: ReactNode }) {
  return (
    <button
      aria-label={label}
      className={clsx(
        "flex h-11 min-w-0 flex-1 overflow-hidden rounded-[5px] border-2 text-[22px] font-medium",
        dim ? "border-[#484848] text-[#777]" : "border-[#909090] text-white",
      )}
    >
      <span className={clsx("flex h-full min-w-0 flex-1 items-center", dim ? "bg-[#404040]" : "bg-[#666]")}>{children}</span>
      <span className={clsx("flex h-full w-6 items-center justify-center border-l", dim ? "border-[#3a3a3a] bg-[#333]" : "border-[#888] bg-[#3c3c3c]")}>{end}</span>
    </button>
  );
}

function SolidRow({ label }: { label: string }) {
  return (
    <div className="flex">
      <AttributeRow label={label} end={<Chevron />}>
        <span className="ml-3 size-7 rounded-sm bg-[#e6e6e6]" />
        <span className="flex-1 pr-[70px] text-right">Solid</span>
      </AttributeRow>
    </div>
  );
}

function AttributesPalette() {
  return (
    <section className="flex-1 bg-[#282828]">
      <PanelHeader title="Attributes" help />
      <div className="flex flex-col gap-2 pl-1.5 pr-2 pt-2">
        <SectionTitle>Fill</SectionTitle>
        <SolidRow label="Fill style" />
        <button aria-label="Fill color" className="h-11 rounded-[5px] bg-white" />
        <div className="flex">
          <AttributeRow label="Fill opacity" end={dots}>
            <span className="h-full w-5 bg-linear-to-r from-[#e8e8e8] to-[#7c7c7c]" />
            <span className="flex h-full flex-1 items-center justify-end bg-[#7c7c7c] pr-2.5 [text-shadow:0_2px_6px_#000]">100%</span>
          </AttributeRow>
        </div>
        <SectionTitle>Pen</SectionTitle>
        <SolidRow label="Pen style" />
        <button aria-label="Pen color" className="h-11 rounded-[5px] border-2 border-[#484848] bg-black" />
        <div className="flex">
          <AttributeRow label="Pen opacity" end={dots} dim>
            <span className="flex h-full flex-1 items-center justify-end bg-[#4a4a4a] pr-2.5 text-[#222] [text-shadow:0_2px_6px_#111]">100%</span>
          </AttributeRow>
        </div>
        <div className="flex">
          <AttributeRow label="Line weight" end={<Chevron />}>
            <span className="ml-1.5 mr-2 h-px flex-1 bg-white" />
            <span className="pr-2.5">0.05</span>
          </AttributeRow>
        </div>
        <div className="flex items-center gap-1">
          <AttributeRow label="Line start marker" end={<Chevron />} dim>
            <span className="mx-1 h-px flex-1 bg-[#666]" />
          </AttributeRow>
          <button aria-label="Link markers" className="text-white">
            <Icon w={28} h={36}>
              <path d="M8 13V10Q8 3 14 3Q20 3 20 10V13M8 23V26Q8 33 14 33Q20 33 20 26V23M14 12V24" strokeWidth="3" />
              <path d="M2 5L26 31" stroke="#282828" strokeWidth="7" />
              <path d="M2 5L26 31" />
            </Icon>
          </button>
          <AttributeRow label="Line end marker" end={<Chevron />} dim>
            <span className="mx-1 h-px flex-1 bg-[#666]" />
          </AttributeRow>
        </div>
        <SectionTitle>Effects</SectionTitle>
        <div className="flex h-11 items-center pl-2 text-[22px] font-medium text-[#e0e0e0]">
          <label className="flex flex-1 items-center gap-2">
            <input type="checkbox" className="size-6 appearance-none rounded-[5px] bg-[#5c5c5c]" />
            Shadow
          </label>
          <button aria-label="Shadow color" className="mr-1 h-11 w-11 rounded-[5px] border-2 border-[#484848] bg-black" />
          <button aria-label="Shadow settings" className="flex h-11 w-[26px] items-center justify-center rounded-[5px] border-2 border-[#808080] bg-[#3c3c3c] text-white">
            {dots}
          </button>
        </div>
      </div>
    </section>
  );
}

/* 3D view */

function LevelMarker({ x, y, r, angle }: { x: number; y: number; r: number; angle: number }) {
  return (
    <g transform={`translate(${x} ${y}) rotate(${angle})`}>
      <path d={`M${-r - 20} 0H${r + 18}M0 ${-r - 15}V${r + 15}`} stroke="#fff" strokeWidth="1.5" />
      <circle r={r} fill="#fff" stroke="#111" />
      <path d={`M0 0V${-r}A${r} ${r} 0 0 1 ${r} 0ZM0 0V${r}A${r} ${r} 0 0 1 ${-r} 0Z`} fill="#55c1bf" />
    </g>
  );
}

function Viewport() {
  return (
    <svg viewBox="408 376 3038 1762" preserveAspectRatio="xMidYMid slice" className="block min-h-0 w-full flex-1" fontFamily="Liberation Sans, sans-serif">
      <defs>
        <linearGradient id="sky" x1="0" y1="0" x2="0" y2="1">
          <stop offset="0" stopColor="#474747" />
          <stop offset="1" stopColor="#535353" />
        </linearGradient>
        <linearGradient id="ground" x1="0" y1="0" x2="0" y2="1">
          <stop offset="0" stopColor="#242424" />
          <stop offset="0.5" stopColor="#2f2f2f" />
          <stop offset="1" stopColor="#393939" />
        </linearGradient>
      </defs>
      <rect x="408" y="376" width="3038" height="648" fill="url(#sky)" />
      <rect x="408" y="1024" width="3038" height="1114" fill="url(#ground)" />

      {/* guides between the floors */}
      <g stroke="#f2a13c" strokeWidth="2.5" strokeDasharray="22 33" fill="none">
        <path d="M1300 780L1325 1180L1347 1537" />
        <path d="M1628 815L1637 1158L1647 1467" />
        <path d="M1806 783L1811 1177L1815 1530" />
        <path d="M2006 810L2004 1160L2001 1476" />
        <path d="M2634 722L2599 1214L2569 1646" />
      </g>

      {/* second floor */}
      <g stroke="#3a3a3a" strokeWidth="1.5" strokeLinejoin="round">
        <path d="M1300 779L2091 544L2634 722L2006 810L1806 783L1628 815Z" fill="#6b6b6b" />
        <path d="M1298 748L2091 481V544L1300 779Z" fill="#f3f3f3" />
        <path d="M2091 481L2636 685L2634 722L2091 544Z" fill="#8e8e8e" />
      </g>

      {/* main floor, selected */}
      <g strokeLinejoin="round">
        <path d="M1325 1180L1637 1158L1811 1177L2004 1160L2600 1214L2077 1320Z" fill="#e2e2e2" />
        <path d="M1400 1200L1637 1183L1811 1206L2004 1187L2480 1234M1637 1160V1183M1811 1180V1206M2004 1162V1187" fill="none" stroke="#dadad4" strokeWidth="5" />
        <path d="M1325 1180L2077 1320V1373L1326 1209Z" fill="#f3f3f3" />
        <path d="M2077 1320L2600 1214L2598 1252L2077 1373Z" fill="#8e8e8e" />
        <path d="M1325 1180L1637 1158L1811 1177L2004 1160L2600 1214L2598 1252L2077 1373L1326 1209Z" fill="none" stroke="#95652a" strokeWidth="6" />
        <path d="M1325 1180L1637 1158L1811 1177L2004 1160L2600 1214L2598 1252L2077 1373L1326 1209Z" fill="none" stroke="#e8962f" strokeWidth="2" />
        <path d="M1325 1180L2077 1320L2600 1214M2077 1320V1373" fill="none" stroke="#e8b476" strokeWidth="5" />
        <path d="M1325 1180L2077 1320L2600 1214M2077 1320V1373" fill="none" stroke="#a8701f" strokeWidth="2" />
      </g>

      {/* lower floor */}
      <g stroke="#555" strokeWidth="1.5" strokeLinejoin="round">
        <path d="M1347 1537L1647 1467L1815 1530L2001 1476L2569 1646L2068 1966Z" fill="#e2e2e2" />
        <path d="M1347 1537L2068 1966V2011L1348 1562Z" fill="#f3f3f3" />
        <path d="M2068 1966L2569 1646L2568 1678L2068 2011Z" fill="#8e8e8e" />
      </g>

      {/* level tags */}
      <g stroke="#55c1bf" strokeWidth="1.5" strokeDasharray="48 6 4 6">
        <path d="M1106 724L1297 748" />
        <path d="M1145 1192L1321 1180" />
        <path d="M1175 1576L1345 1537" />
      </g>
      <LevelMarker x={1063} y={719} r={26} angle={5} />
      <LevelMarker x={1103} y={1196} r={24} angle={-4} />
      <LevelMarker x={1135} y={1586} r={23} angle={-9} />
      <g fill="#fff" textAnchor="end">
        <text transform="translate(1015 705) rotate(7)" fontSize="43">
          Second Floor
        </text>
        <text transform="translate(1018 745) rotate(6)" fontSize="40">
          9'-6"
        </text>
        <text transform="translate(1058 1190) rotate(-4)" fontSize="39">
          Main Floor
        </text>
        <text transform="translate(1060 1230) rotate(-3)" fontSize="38">
          0"
        </text>
        <text transform="translate(1094 1591) rotate(-12)" fontSize="38">
          Lower Floor
        </text>
        <text transform="translate(1097 1627) rotate(-11)" fontSize="38">
          -8'-6"
        </text>
      </g>

      {/* view cube */}
      <g stroke="#a4d0f5" strokeWidth="2.5" strokeLinejoin="round">
        <path d="M476 1953L499 1919L543 1912H582L628 1919L650 1953V2014L627 2047L582 2053H538L499 2047L476 2014Z" fill="#637b91" />
        <path d="M496 1926L499 1919L543 1912H582L628 1919V1926L582 1932H540Z" fill="#6f8aa3" />
        <path d="M540 1932H582L560 1966Z" fill="#8fb4de" />
        <path d="M560 1966V2027" />
        <path d="M560 2027L540 2053H582Z" fill="#8fb4de" />
      </g>
      <g fill="#fff">
        <ellipse cx="563" cy="1923" rx="24" ry="4" transform="rotate(3 563 1923)" />
        <ellipse cx="592" cy="1919" rx="26" ry="4" transform="rotate(5 592 1919)" />
        <path d="M555 1923H572M582 1917L596 1919M594 1922H612" stroke="#1a35e8" strokeWidth="2.5" />
        <rect x="494" y="1977" width="50" height="24" rx="11" transform="rotate(7 519 1989)" />
        <rect x="579" y="1978" width="52" height="24" rx="11" transform="rotate(-7 605 1990)" />
      </g>
      <g fill="#1a35e8" fontSize="15" textAnchor="middle">
        <text transform="translate(518 1995) rotate(5)">Front</text>
        <text transform="translate(605 1996) rotate(-5)">Right</text>
      </g>
      <path d="M464 2051V1907" stroke="#1020c8" strokeWidth="3" />
      <path d="M464 2051L571 2036" stroke="#5ac545" strokeWidth="2.5" />
      <path d="M464 2051L565 2068" stroke="#c93425" strokeWidth="2.5" />
      <g fontSize="20" textAnchor="middle">
        <text x="464" y="1896" fill="#1020e0">
          Z
        </text>
        <text x="585" y="2042" fill="#5ac545">
          Y
        </text>
        <text x="579" y="2078" fill="#c93425">
          X
        </text>
      </g>
    </svg>
  );
}

function DrawingArea() {
  return (
    <main className="mx-3 flex min-w-0 flex-1 flex-col">
      <div className="flex h-14 items-end bg-[#141414] pl-2">
        <div className="flex h-12 w-[464px] items-center rounded-t-lg bg-[#333] text-[26px] font-medium text-[#e0e0e0]">
          <button aria-label="Close tab" className="ml-[19px] mr-[11px] text-[#b0b0b0]">
            <Icon w={18} h={18}>
              <path d="M2 2L16 16M16 2L2 16" />
            </Icon>
          </button>
          <span>Layers as Floors.vwx</span>
        </div>
        <button aria-label="New tab" className="mb-4 ml-4 text-[#e0e0e0]">
          <Icon w={18} h={18}>
            <path d="M9 1V17M1 9H17" strokeWidth="2.5" />
          </Icon>
        </button>
      </div>
      <Viewport />
    </main>
  );
}

/* Right column */

function PaletteTab({ label, active, divider, children }: { label: string; active?: boolean; divider?: boolean; children: ReactNode }) {
  return (
    <button
      role="tab"
      aria-selected={!!active}
      aria-label={label}
      className={clsx("relative flex h-[52px] w-[54px] items-center justify-center text-[#ececec]", active && "rounded-t-lg bg-[#333]")}
    >
      {children}
      {divider && <span className="absolute right-0 top-2 h-9 w-0.5 bg-[#555]" />}
    </button>
  );
}

const fieldStyle = "h-8 border border-[#4a4a4a] border-b-[#707070] bg-[#3a3a3a] px-1.5 text-[22px] text-[#e0e0e0]";

function ObjectInfo() {
  const coords = [
    ["X:", `-11'6 1/2"`],
    ["Y:", `-3'1 1/2"`],
    ["Z:", `0"`],
  ];
  const push = "h-8 rounded-md border-t border-[#858585] bg-[#666] text-[22px] leading-[30px] text-[#e6e6e6] shadow-[0_1px_2px_rgba(0,0,0,0.6)]";
  return (
    <section className="mb-3 bg-[#282828] text-[22px] leading-7 text-[#e0e0e0]">
      <PanelHeader title="Object Info - Shape" help />
      <div role="tablist" className="flex h-[60px] items-end bg-[#141414] pl-[9px]">
        <PaletteTab label="Shape" active>
          <Icon w={36} h={32}>
            <path d="M12 3H34V22H12Z" fill="currentColor" stroke="none" />
            <circle cx="13" cy="19" r="12" fill="currentColor" stroke="#333" strokeWidth="2" />
          </Icon>
        </PaletteTab>
        <PaletteTab label="Data" divider>
          <Icon w={38} h={32}>
            <path d="M3 3H35V28H31Q30 23 26 24Q23 25 23 28H15Q14 23 10 24Q7 25 7 28H3Z" fill="currentColor" stroke="currentColor" strokeWidth="2" />
            <path d="M10 9H28M10 15H25" stroke="#141414" strokeWidth="2.5" />
          </Icon>
        </PaletteTab>
        <PaletteTab label="Render" divider>
          <Icon w={40} h={34}>
            <g transform="scale(0.95 0.8)">{teapotGlyph}</g>
          </Icon>
        </PaletteTab>
      </div>
      <h3 className="flex h-12 items-center bg-[#333] pl-[9px] font-bold">Slab</h3>
      <div className="flex flex-col border-2 border-r-0 border-[#3e3e3e] pb-4 pl-[10px] pr-[10px]">
        <div className="mt-[10px] flex items-center pr-1">
          <span className="w-[82px] pl-[5px]">Class:</span>
          <Select label="Class" value="None" arrow="plain" className="flex-1" />
        </div>
        <div className="mt-[18px] flex items-center pr-1">
          <span className="w-[82px] pl-[5px]">Layer:</span>
          <Select label="Layer" value="Main Floor" arrow="plain" className="flex-1" />
        </div>

        <div className="mt-[18px] flex h-[150px] rounded-lg border border-[#4a4a4a] bg-[#303030] py-[13px] pl-[17px] pr-[15px]">
          <div className="flex w-16 flex-col items-center gap-2 pt-1">
            <button aria-label="3D plane" className="flex h-[50px] w-16 shrink-0 items-center justify-center rounded-lg bg-[#606060]">
              <Icon w={44} h={36}>{planeGlyph}</Icon>
            </button>
            <button aria-label="Screen plane" className="pr-1">
              <Icon w={40} h={40}>
                <path d="M2 2H38V38H2ZM2 20H38M20 2V38" stroke="#e27bdb" fill="#5a3355" strokeLinejoin="round" />
              </Icon>
            </button>
          </div>
          <div className="flex flex-1 flex-col gap-[14px] pl-[30px]">
            {coords.map(([axis, value]) => (
              <label key={axis} className="flex items-center">
                <span className="w-[38px]">{axis}</span>
                <input defaultValue={value} className={clsx(fieldStyle, "w-full min-w-0 flex-1")} />
              </label>
            ))}
          </div>
        </div>

        <div className="mt-[14px] flex items-center pr-1">
          <span className="w-[124px] pl-[5px]">Z Ref:</span>
          <Select label="Z Ref" value="Layer Elevation" className="flex-1" />
        </div>
        <label className="mt-[22px] flex items-center pr-0.5">
          <span className="w-[126px] pl-[5px]">Z Off:</span>
          <input defaultValue={`0"`} className={clsx(fieldStyle, "min-w-0 flex-1")} />
        </label>
        <div className="mt-4 flex items-center pr-1">
          <span className="w-[124px] pl-[5px]">Style:</span>
          <Select label="Style" value="Unstyled" className="flex-1" />
        </div>
        <div className="mt-[22px] flex items-center pr-1">
          <span className="w-[124px] pl-[5px]">Bounding:</span>
          <Select label="Bounding" value="Manual" className="flex-1" />
        </div>
        <button className={clsx(push, "mt-[18px]")}>Components...</button>
        <button className={clsx(push, "mt-[10px]")}>Edge Offsets...</button>
        <div className="mt-[10px] flex">
          <span className="w-[129px] pl-[5px]">Thick:</span>
          <span>8"</span>
        </div>
        <button className={clsx(push, "mt-[10px]")}>Slab Data...</button>
        <h4 className="mt-[15px] flex items-center gap-3.5 pl-[5px] font-bold">
          Energos
          <span className="h-0.5 flex-1 bg-[#444]" />
        </h4>
        <label className="mt-[11px] flex items-center gap-2">
          <input type="checkbox" className="size-6 appearance-none rounded-[5px] bg-[#5c5c5c]" />
          Include in calculations
        </label>
        <hr className="mt-[26px] border-t-2 border-[#444]" />
        <div className="mt-4 flex">
          <span className="w-[129px] pl-[5px]">Area:</span>
          <span>27.064 sq m</span>
        </div>
      </div>
      <label className="flex h-[46px] items-center gap-1.5 pl-1 pr-1">
        Name:
        <input className="h-[34px] min-w-0 flex-1 border border-[#4a4a4a] border-b-[#707070] bg-[#363636]" />
      </label>
    </section>
  );
}

const designLayers = [
  { name: "Roof", order: 1 },
  { name: "Second Floor", order: 2 },
  { name: "Main Floor", order: 3, current: true },
  { name: "Lower Floor", order: 4 },
];

function Navigation() {
  const th = "text-left font-medium";
  const rule = "flex h-8 items-center border-r border-[#444]";
  return (
    <section className="flex flex-1 flex-col bg-[#333] text-[22px] leading-7 text-[#e0e0e0]">
      <PanelHeader title="Navigation - Design Layers" help />
      <div role="tablist" className="flex h-[60px] items-end bg-[#141414] pl-[9px]">
        <PaletteTab label="Classes">
          <Icon w={40} h={38}>{classGlyph}</Icon>
        </PaletteTab>
        <PaletteTab label="Design Layers" active>
          <Icon w={40} h={40}>{layersGlyph}</Icon>
        </PaletteTab>
        <PaletteTab label="Sheet Layers" divider>
          <Icon w={38} h={36}>
            <path d="M3 3H35V32H3Z" strokeWidth="5" />
            <path d="M24 34V24H35V34Z" fill="currentColor" stroke="none" />
          </Icon>
        </PaletteTab>
        <PaletteTab label="Viewports" divider>
          <Icon w={38} h={36}>
            <path d="M2 10V3H9M29 3H36V10M36 26V33H29M9 33H2V26" />
            <path d="M7 29V19L14 7L20 14L24 10L31 20V29Z" fill="currentColor" stroke="none" />
          </Icon>
        </PaletteTab>
        <PaletteTab label="Saved Views" divider>
          <Icon w={44} h={40}>{fileEyeGlyph}</Icon>
        </PaletteTab>
        <PaletteTab label="References" divider>
          <Icon w={40} h={38}>
            <path d="M10 2H28L38 12V36H10Z" fill="currentColor" stroke="none" />
            <path d="M27 3V12H35" stroke="#141414" strokeWidth="2.5" />
            <path d="M3 30Q2 16 14 16V8L27 20L14 31V24Q7 24 7 30Z" fill="currentColor" stroke="#141414" strokeWidth="2.5" />
          </Icon>
        </PaletteTab>
      </div>
      <div className="flex flex-col gap-1 pl-[9px] pr-[3px] pt-1">
        <div className="flex items-center">
          <span className="w-[156px] whitespace-nowrap">Layer Options:</span>
          <Select label="Layer Options" value="Show/Snap/Modify Others" arrow="updown" className="flex-1" />
        </div>
        <div className="flex items-center">
          <span className="w-[156px]">Filter:</span>
          <Select label="Filter" value="<All Layers>" arrow="updown" className="flex-1" />
        </div>
      </div>
      <label className="mx-1.5 mb-2 mt-2 flex h-8 items-center gap-3.5 rounded-lg border border-[#505050] border-b-[#707070] bg-[#3e3e3e] pl-3.5">
        <Icon w={24} h={24}>
          <circle cx="10" cy="10" r="8" strokeWidth="2.5" />
          <path d="M16 16L22 22" strokeWidth="2.5" />
        </Icon>
        <input aria-label="Search layers" placeholder="Search" className="min-w-0 flex-1 text-[22px] placeholder:text-[#808080]" />
      </label>
      <div className="relative flex-1 overflow-hidden border-l-2 border-t-2 border-[#404040] bg-[#1f1f1f] text-[#f2f2f2]">
        <table className="w-full table-fixed border-collapse">
          <colgroup>
            <col className="w-[93px]" />
            <col className="w-[50px]" />
            <col />
            <col className="w-[50px]" />
            <col className="w-[35px]" />
          </colgroup>
          <thead>
            <tr className="h-[54px] whitespace-nowrap border-b-2 border-[#404040]">
              <th className={th}>
                <div className={clsx(rule, "pl-[10px]")}>Visib...</div>
              </th>
              <th className={th} aria-label="Active">
                <div className={rule} />
              </th>
              <th className={th}>
                <div className={clsx(rule, "pl-[11px]")}>Design Layer Name</div>
              </th>
              <th className={th}>
                <div className={clsx(rule, "pl-[11px]")}>#</div>
              </th>
              <th className="overflow-hidden pl-[11px] text-left font-medium">Sto</th>
            </tr>
          </thead>
          <tbody>
            {designLayers.map((layer) => (
              <tr key={layer.name} className={clsx("h-8", layer.current && "bg-[#466389]")}>
                <td className="pl-0.5">
                  <svg viewBox="0 0 28 20" className="relative z-10 h-5 w-7">
                    <path d="M0 10Q14 -10 28 10Q14 30 0 10Z" fill="#ececec" />
                    <circle cx="14" cy="10" r="4" fill={layer.current ? "#466389" : "#1f1f1f"} />
                  </svg>
                </td>
                <td className="pl-3">
                  {layer.current && (
                    <svg viewBox="0 0 28 22" className="h-[22px] w-7" fill="none" stroke="#ececec" strokeWidth="2.5">
                      <path d="M2 12L10 19L26 2" />
                    </svg>
                  )}
                </td>
                <td className={clsx("pl-[7px]", layer.current && "font-bold")}>{layer.name}</td>
                <td className="pl-[7px]">{layer.order}</td>
                <td />
              </tr>
            ))}
          </tbody>
        </table>
        {/* visibility column rules run the full height of the list */}
        <div className="pointer-events-none absolute bottom-0 left-1 top-14 flex w-[88px] justify-between">
          <span className="w-px bg-[#606060]" />
          <span className="w-px bg-[#606060]" />
          <span className="w-px bg-[#606060]" />
          <span className="w-px bg-[#606060]" />
        </div>
      </div>
    </section>
  );
}

function StatusBar() {
  return (
    <footer className="flex h-[46px] items-center bg-[#282828] text-[22px] text-[#e0e0e0]">
      <span className="ml-[10px]">Selection Tool</span>
      <b className="mx-[19px]">X</b>
      <span className="flex-1">Rectangular Marquee Mode</span>
      <span className="w-[324px]">X: 22'0 1/2"</span>
      <span className="w-[324px]">Y: 15'8 1/2"</span>
      <span className="w-[330px]">Z: 0"</span>
    </footer>
  );
}

export default function App() {
  return (
    <div className="flex min-h-screen flex-col bg-white px-28 pb-[148px] pt-[76px] font-['Inter',sans-serif]">
      <div className="flex flex-1 flex-col overflow-hidden rounded-[20px] border-2 border-[#4c4c4c] bg-[#282828] shadow-[0_0_0_1px_#000,0_36px_90px_rgba(0,0,0,0.6),0_0_30px_rgba(0,0,0,0.2)]">
        <TitleBar />
        <ViewBar />
        <ModeBar />
        <div className="flex flex-1 bg-[#2b2b2b]">
          <aside className="flex w-[282px] shrink-0 flex-col">
            <BasicPalette />
            <ToolSetsPalette />
            <AttributesPalette />
          </aside>
          <DrawingArea />
          <aside className="flex w-[492px] shrink-0 flex-col">
            <ObjectInfo />
            <Navigation />
          </aside>
        </div>
        <StatusBar />
      </div>
    </div>
  );
}
